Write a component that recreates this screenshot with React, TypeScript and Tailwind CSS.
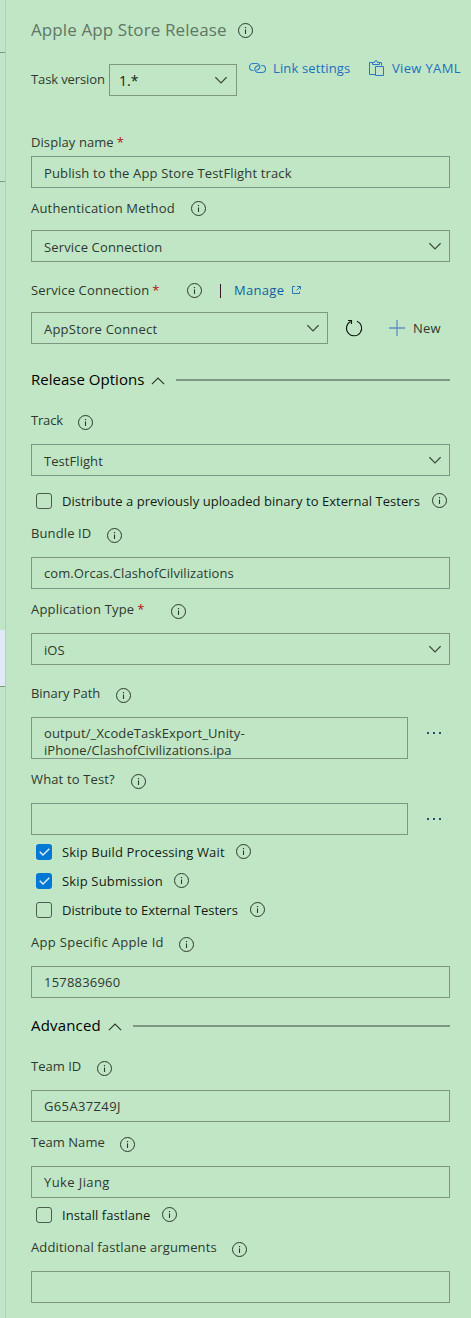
import React from "react";

type IconProps = { className?: string };

function InfoIcon({ className = "" }: IconProps) {
  return (
    <svg className={`size-[15px] shrink-0 ${className}`} viewBox="0 0 15 15" fill="none" stroke="#2c3a2e">
      <circle cx="7.5" cy="7.5" r="7" strokeWidth="1" />
      <path d="M7.5 6.4V11" strokeWidth="1.1" />
      <path d="M7.5 4V5.2" strokeWidth="1.2" />
    </svg>
  );
}

function ChevronDown() {
  return (
    <svg className="h-[8px] w-[12px] shrink-0" viewBox="0 0 12 8" fill="none" stroke="#3c4c3e" strokeWidth="1.2">
      <path d="M0.4 1.2L6 6.8L11.6 1.2" />
    </svg>
  );
}

function ChevronUp({ className = "" }: IconProps) {
  return (
    <svg className={`h-[8px] w-[14px] shrink-0 ${className}`} viewBox="0 0 14 8" fill="none" stroke="#2c3a2e" strokeWidth="1.2">
      <path d="M0.9 7.2L7 1.1L13.1 7.2" />
    </svg>
  );
}

function LinkIcon() {
  return (
    <svg className="mt-[10px] h-[12px] w-[17px] shrink-0" viewBox="0 0 17 12" fill="none" stroke="#2f7bc8" strokeWidth="1.1">
      <path d="M4.5 8.500H4A3.500 3.500 0 0 1 4 1.500H7.600A3.300 3.300 0 0 1 10.400 6.400Q9.600 7.700 7.400 8.300" />
      <path d="M12.300 3.500H13A3.500 3.500 0 0 1 13 10.500H9A3.300 3.300 0 0 1 6.400 5.400Q7.300 3.900 9.600 3.600" />
    </svg>
  );
}

function ClipboardIcon() {
  return (
    <svg className="mt-2 h-[16px] w-[15px] shrink-0" viewBox="0 0 15 16" fill="none" stroke="#2878c8" strokeWidth="1">
      <path d="M6 14.5H0.5V2.5H3.5M10.500 2.500H12.500V5.500" />
      <path d="M3.500 4.500V2.500H5.500A1.500 1.800 0 0 1 8.500 2.500H10.500V4.500Z" />
      <path d="M6.500 6.500H14.500V15.500H6.500Z" />
    </svg>
  );
}

function ExternalIcon() {
  return (
    <svg className="mt-[15px] ml-[8px] h-[10px] w-[9px] shrink-0" viewBox="0 0 9 10" fill="none" stroke="#2a78ae" strokeWidth="1">
      <path d="M3 1.500H0.500V8.500H7.500V6.500" />
      <path d="M5 1.500H8.500V4.500M8.500 1.500L4.500 5.500" />
    </svg>
  );
}

function RefreshIcon() {
  return (
    <svg className="ml-[17px] h-[18px] w-[18px] shrink-0" viewBox="0 0 18 18" fill="none" stroke="#101a12" strokeWidth="1.1">
      <path d="M12 2.2A7.600 7.600 0 1 1 5.700 2.400" />
      <path d="M3 1.500H6.500V5" />
    </svg>
  );
}

function PlusIcon() {
  return (
    <svg className="ml-[26px] size-[16px] shrink-0" viewBox="0 0 16 16" stroke="#5f8fc9" strokeWidth="1.300">
      <path d="M8 0V16M0 8H16" />
    </svg>
  );
}

function Ellipsis() {
  return (
    <div className="mt-[15px] ml-[19px] flex h-[2px] gap-1">
      <i className="size-[2px] bg-[#27506a]" />
      <i className="size-[2px] bg-[#27506a]" />
      <i className="size-[2px] bg-[#27506a]" />
    </div>
  );
}

type LabelProps = {
  text: string;
  className: string;
  required?: boolean;
  children?: React.ReactNode;
};

function Label({ text, className, required, children }: LabelProps) {
  return (
    <div className="flex h-[42px] items-start">
      <span className={`shrink-0 ${className}`}>
        {text}
        {required && <span className="ml-[3px] tracking-normal text-[#b01010]">*</span>}
      </span>
      <InfoIcon className="mt-[13px]" />
      {children}
    </div>
  );
}

function TextField({ value = "", className = "" }: { value?: string; className?: string }) {
  return <div className={`flex h-8 items-center border border-[#7d9781] px-3 ${className}`}>{value}</div>;
}

function SelectField({ value, className = "" }: { value: string; className?: string }) {
  return (
    <div className={`flex h-8 items-center justify-between border border-[#7d9781] pr-2 pl-3 ${className}`}>
      <span className="pt-[2px]">{value}</span>
      <ChevronDown />
    </div>
  );
}

function CheckRow({ text, textClass, checked, className = "" }: { text: string; textClass: string; checked?: boolean; className?: string }) {
  return (
    <div className={`flex h-4 items-center pl-[5px] ${className}`}>
      {checked ? (
        <span className="flex size-4 items-center justify-center rounded-[3px] bg-[#0078d4]">
          <svg className="h-[8px] w-[11px]" viewBox="0 0 11 8" fill="none" stroke="#e6f4ff" strokeWidth="1.3">
            <path d="M0.700 3.700L4 7L10.300 0.700" />
          </svg>
        </span>
      ) : (
        <span className="size-4 rounded-[3px] border border-[#4b5d4e]" />
      )}
      <span className={`ml-[10px] shrink-0 whitespace-nowrap text-[#141c15] ${textClass}`}>{text}</span>
      <InfoIcon className="mb-px" />
    </div>
  );
}

function SectionHeader({ text, className, textClass }: { text: string; className: string; textClass: string }) {
  return (
    <div className={`mb-[13px] flex h-5 items-center ${className}`}>
      <span className={`shrink-0 text-[15px] text-black ${textClass}`}>{text}</span>
      <ChevronUp className="mt-[3px]" />
      <span className="mt-[2px] ml-[11px] h-[2px] grow bg-[#7d9781]" />
    </div>
  );
}

export default function App() {
  return (
    <div className="flex h-[1318px] w-[471px] overflow-hidden bg-[#c1e6c5] font-['Open_Sans',sans-serif] text-[13px] leading-5 text-[#2d392f]">
      <div className="flex w-[5px] shrink-0 flex-col">
        <div className="h-[53px] border-b border-[#7f9983]" />
        <div className="h-[129px] border-b border-[#7f9983]" />
        <div className="h-[448px]" />
        <div className="h-[57px] border-b border-[#7f9983] bg-[#deecf9]" />
      </div>

      <div className="flex grow flex-col border-l border-[#bfc9c1] pl-[25px]">
        <div className="flex h-[52px] items-start">
          <h1 className="mt-[18px] w-[207px] text-[17px] leading-6 tracking-[0.1px] text-[#5f7763]">Apple App Store Release</h1>
          <InfoIcon className="mt-[23px]" />
        </div>

        <div className="flex h-[76px] items-start">
          <span className="mt-[17px] w-[78px] tracking-[-0.11px]">Task version</span>
          <div className="mt-3 flex h-8 w-[128px] items-center justify-between border border-[#7d9781] pr-[9px] pl-[9px] text-[14px] text-[#141c15]">
            <span className="pt-[2px]">1.*</span>
            <ChevronDown />
          </div>
          <a className="ml-3 flex text-[#1b6fc0]">
            <LinkIcon />
            <span className="mt-[6px] ml-[7px] w-[96px] tracking-[0.14px]">Link settings</span>
          </a>
          <a className="flex text-[#1b6fc0]">
            <ClipboardIcon />
            <span className="mt-[6px] ml-2 whitespace-nowrap tracking-[0.34px]">View YAML</span>
          </a>
        </div>

        <div className="w-[419px]">
          <div className="h-7 pt-1 tracking-[0.08px]">
            Display name<span className="ml-[3px] tracking-normal text-[#b01010]">*</span>
          </div>
          <TextField value="Publish to the App Store TestFlight track" className="pt-[2px] tracking-[0.14px]" />

          <Label text="Authentication Method" className="mt-[10px] w-[160px] tracking-[0.19px]" />
          <SelectField value="Service Connection" className="tracking-[0.15px]" />

          <div className="mt-2">
            <Label text="Service Connection" className="mt-[10px] w-[156px] tracking-[0.15px]" required>
              <span className="mt-[14px] ml-[18px] mr-px h-[14px] w-px bg-[#3a1530]" />
              <a className="mt-[10px] ml-[12px] tracking-[0.3px] text-[#0f5fa3]">Manage</a>
              <ExternalIcon />
            </Label>
            <div className="flex items-center">
              <SelectField value="AppStore Connect" className="w-[297px] tracking-[0.22px]" />
              <RefreshIcon />
              <PlusIcon />
              <span className="ml-2 tracking-[0.21px]">New</span>
            </div>
          </div>

          <SectionHeader text="Release Options" className="mt-[25px]" textClass="w-[121px] tracking-[0.02px] -mr-px" />

          <Label text="Track" className="mt-2 w-[47px] tracking-[-0.19px]" />
          <SelectField value="TestFlight" className="tracking-[0.06px]" />
          <CheckRow
            text="Distribute a previously uploaded binary to External Testers"
            className="mt-[17px] mb-[6px]"
            textClass="w-[370px] tracking-[0.05px]"
          />

          <Label text="Bundle ID" className="mt-2 w-[76px] tracking-[0.11px]" />
          <TextField value="com.Orcas.ClashofCilvilizations" className="mb-[2px] tracking-[0.08px]" />

          <Label text="Application Type" className="mt-2 w-[140px] tracking-[0.2px]" required />
          <SelectField value="iOS" className="mb-[10px]" />

          <Label text="Binary Path" className="mt-2 w-[85px] tracking-[-0.04px]" />
          <div className="mb-[2px] flex">
            <div className="h-[42px] w-[377px] border border-[#7d9781] px-3 pt-[7px] leading-[17px]">
              <div className="tracking-[0.12px]">output/_XcodeTaskExport_Unity-</div>
              <div className="tracking-[0.09px]">iPhone/ClashofCivilizations.ipa</div>
            </div>
            <Ellipsis />
          </div>

          <Label text="What to Test?" className="mt-2 w-[100px] tracking-[0.14px]" />
          <div className="flex">
            <TextField className="w-[377px]" />
            <Ellipsis />
          </div>

          <div className="mt-[9px] mb-[6px] flex flex-col gap-[13px]">
            <CheckRow checked text="Skip Build Processing Wait" textClass="w-[174px] tracking-[0.16px]" />
            <CheckRow checked text="Skip Submission" textClass="w-[112px] tracking-[0.16px]" />
            <CheckRow text="Distribute to External Testers" textClass="w-[188px] tracking-[-0.02px]" />
          </div>

          <Label text="App Specific Apple Id" className="mt-2 w-[148px] tracking-[0.31px]" />
          <TextField value="1578836960" className="tracking-[0.2px]" />

          <SectionHeader text="Advanced" className="mt-[17px]" textClass="w-[77px] tracking-[0.17px]" />

          <Label text="Team ID" className="mt-2 w-[66px] tracking-[0.02px]" />
          <TextField value="G65A37Z49J" className="mb-[2px] tracking-[0.36px]" />

          <Label text="Team Name" className="mt-2 w-[89px] tracking-[0.04px]" />
          <TextField value="Yuke Jiang" className="tracking-[0.4px]" />
          <CheckRow text="Install fastlane" className="mt-[9px] mb-[6px]" textClass="w-[100px] tracking-[0.03px]" />

          <Label text="Additional fastlane arguments" className="mt-2 w-[201px] tracking-[0.12px]" />
          <TextField />
        </div>
      </div>
    </div>
  );
}
